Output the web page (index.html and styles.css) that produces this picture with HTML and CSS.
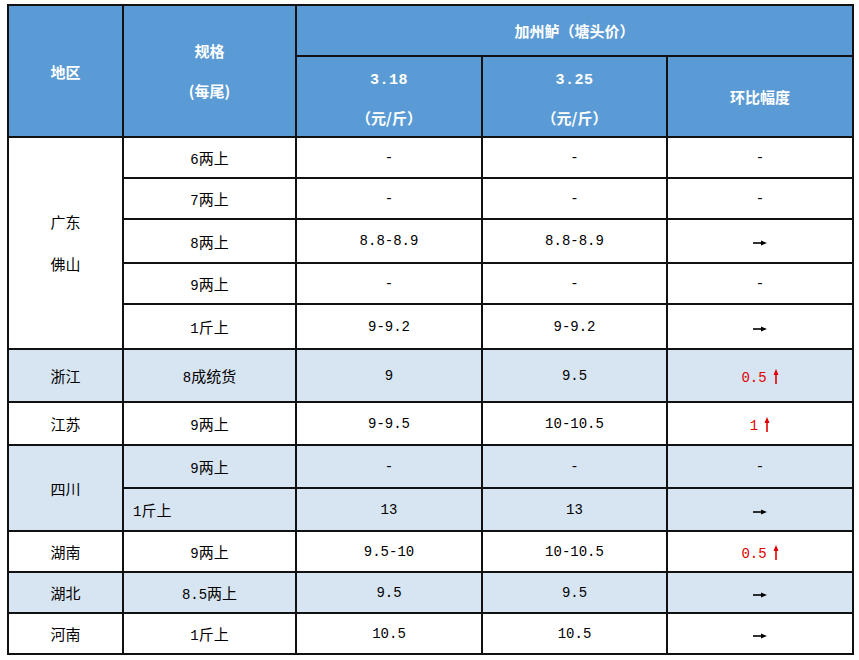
FILE: index.html
```html
<!DOCTYPE html>
<html lang="zh-CN">
<head>
<meta charset="utf-8">
<title>加州鲈（塘头价）</title>
<link rel="stylesheet" href="styles.css">
</head>
<body>
<table class="price">
  <colgroup>
    <col class="c-region"><col class="c-spec"><col class="c-p"><col class="c-p2"><col class="c-p">
  </colgroup>
  <thead>
    <tr class="h1">
      <th rowspan="2">地区</th>
      <th rowspan="2"><span class="ln">规格</span><span class="ln">(每尾)</span></th>
      <th colspan="3">加州鲈（塘头价）</th>
    </tr>
    <tr class="h2">
      <th class="pt"><span class="ln n">3.18</span><span class="ln">（元/斤）</span></th>
      <th class="pt"><span class="ln n">3.25</span><span class="ln">（元/斤）</span></th>
      <th>环比幅度</th>
    </tr>
  </thead>
  <tbody>
    <tr class="r41">
      <td rowspan="5" class="two"><span class="ln">广东</span><span class="ln">佛山</span></td>
      <td><span class="n">6</span>两上</td><td class="n">-</td><td class="n">-</td><td class="n">-</td>
    </tr>
    <tr class="r41">
      <td><span class="n">7</span>两上</td><td class="n">-</td><td class="n">-</td><td class="n">-</td>
    </tr>
    <tr class="r44">
      <td><span class="n">8</span>两上</td><td class="n">8.8-8.9</td><td class="n">8.8-8.9</td><td><svg class="ar" width="14" height="6" viewBox="0 0 14 6"><line x1="0" y1="3" x2="10" y2="3"/><polygon points="8,0.6 14,3 8,5.4"/></svg></td>
    </tr>
    <tr class="r41">
      <td><span class="n">9</span>两上</td><td class="n">-</td><td class="n">-</td><td class="n">-</td>
    </tr>
    <tr class="r45">
      <td><span class="n">1</span>斤上</td><td class="n">9-9.2</td><td class="n">9-9.2</td><td><svg class="ar" width="14" height="6" viewBox="0 0 14 6"><line x1="0" y1="3" x2="10" y2="3"/><polygon points="8,0.6 14,3 8,5.4"/></svg></td>
    </tr>
    <tr class="r53 alt">
      <td>浙江</td><td><span class="n">8</span>成统货</td><td class="n">9</td><td class="n">9.5</td><td class="up"><span class="n">0.5</span><svg class="ua" width="6" height="15" viewBox="0 0 6 15"><line x1="3" y1="4" x2="3" y2="15"/><polygon points="0.5,6 3,0 5.5,6"/></svg></td>
    </tr>
    <tr class="r43">
      <td>江苏</td><td><span class="n">9</span>两上</td><td class="n">9-9.5</td><td class="n">10-10.5</td><td class="up"><span class="n">1</span><svg class="ua" width="6" height="15" viewBox="0 0 6 15"><line x1="3" y1="4" x2="3" y2="15"/><polygon points="0.5,6 3,0 5.5,6"/></svg></td>
    </tr>
    <tr class="r43 alt">
      <td rowspan="2">四川</td><td><span class="n">9</span>两上</td><td class="n">-</td><td class="n">-</td><td class="n">-</td>
    </tr>
    <tr class="r43 alt">
      <td class="left"><span class="n">1</span>斤上</td><td class="n">13</td><td class="n">13</td><td><svg class="ar" width="14" height="6" viewBox="0 0 14 6"><line x1="0" y1="3" x2="10" y2="3"/><polygon points="8,0.6 14,3 8,5.4"/></svg></td>
    </tr>
    <tr class="r41">
      <td>湖南</td><td><span class="n">9</span>两上</td><td class="n">9.5-10</td><td class="n">10-10.5</td><td class="up"><span class="n">0.5</span><svg class="ua" width="6" height="15" viewBox="0 0 6 15"><line x1="3" y1="4" x2="3" y2="15"/><polygon points="0.5,6 3,0 5.5,6"/></svg></td>
    </tr>
    <tr class="r41 alt">
      <td>湖北</td><td><span class="n">8.5</span>两上</td><td class="n">9.5</td><td class="n">9.5</td><td><svg class="ar" width="14" height="6" viewBox="0 0 14 6"><line x1="0" y1="3" x2="10" y2="3"/><polygon points="8,0.6 14,3 8,5.4"/></svg></td>
    </tr>
    <tr class="r41">
      <td>河南</td><td><span class="n">1</span>斤上</td><td class="n">10.5</td><td class="n">10.5</td><td><svg class="ar" width="14" height="6" viewBox="0 0 14 6"><line x1="0" y1="3" x2="10" y2="3"/><polygon points="8,0.6 14,3 8,5.4"/></svg></td>
    </tr>
  </tbody>
</table>
</body>
</html>
```

FILE: styles.css
```css
html, body {
  margin: 0;
  padding: 0;
  background: #fff;
}

body {
  padding: 4px 0 0 7px;
}

.price {
  border-collapse: collapse;
  table-layout: fixed;
  width: 846px;
  font-family: "Noto Sans CJK SC", sans-serif;
  font-size: 15px;
  color: #000;
}

.c-region { width: 115px; }
.c-spec { width: 173px; }
.c-p { width: 186px; }
.c-p2 { width: 185px; }

.price th,
.price td {
  border: 2px solid #111;
  padding: 0;
  text-align: center;
  vertical-align: middle;
}

.price th {
  background: #5b9bd5;
  color: #fff;
  font-weight: bold;
}

.h1 { height: 51px; }
.h2 { height: 81px; }

.price th.pt { padding-top: 4px; }
.pt .ln { line-height: 37px; }

.r41 { height: 41px; }
.r43 { height: 43px; }
.r44 { height: 44px; }
.r45 { height: 45px; }
.r53 { height: 53px; }

.alt td { background: #d7e4f1; }

.ln {
  display: block;
  line-height: 40px;
}

.two .ln { line-height: 42px; }

.n {
  font-family: "Liberation Mono", monospace;
  font-size: 14px;
}

th .n {
  font-size: 15px;
  letter-spacing: 0.5px;
}

.left {
  text-align: left !important;
  padding-left: 9px !important;
}

.up {
  color: #e00000;
}

.up .n { margin-right: 6px; }

.ar {
  display: inline-block;
  vertical-align: middle;
}

.ar line { stroke: #000; stroke-width: 1.6; }
.ar polygon { fill: #000; }

.ua {
  display: inline-block;
  vertical-align: -2px;
}

.ua line { stroke: #e00000; stroke-width: 1.6; }
.ua polygon { fill: #e00000; }
```
